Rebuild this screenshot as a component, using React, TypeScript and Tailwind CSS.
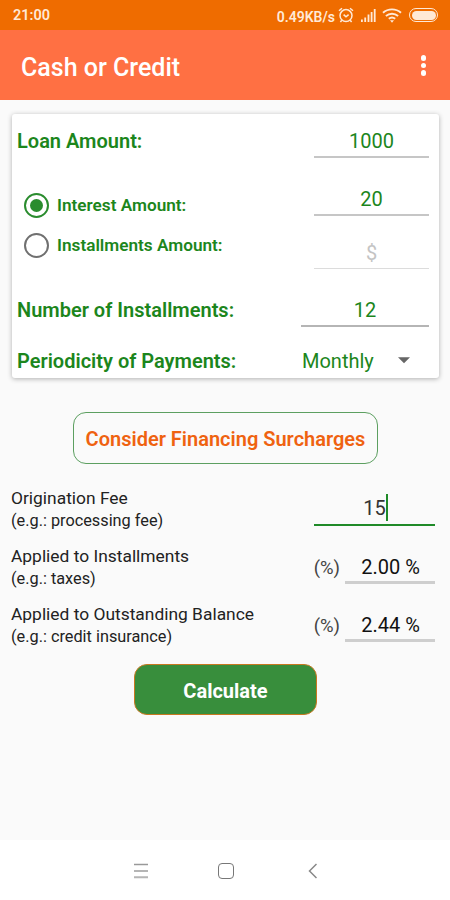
import { useState } from 'react';
import type { ReactNode } from 'react';

function StatusBar() {
  return (
    <div className="flex h-[30px] items-center justify-between bg-[#ef6c00] pl-[13px] pr-[12px] text-[#ffe9d6]">
      <span className="mt-[3px] text-[14.5px] font-semibold leading-none">21:00</span>
      <div className="flex items-center">
        <span className="mt-[3px] text-[14px] font-semibold leading-none">0.49KB/s</span>
        <svg className="ml-[3px]" width="16" height="16" viewBox="0 0 16 16" fill="none" stroke="currentColor" strokeWidth="1.5">
          <circle cx="8" cy="8.6" r="6" />
          <path d="M1 3.8 4 1.2M15 3.8 12 1.2M3.8 13.2 2.4 15M12.2 13.2l1.4 1.8M5.6 7.6 8 9.8l2.6-2.2" />
        </svg>
        <svg className="ml-[7px] mt-[1px]" width="15" height="13" viewBox="0 0 15 13" fill="currentColor">
          <path d="M0 10.5h1.8V13H0zM3.3 8.5h1.8V13H3.3zM6.6 5.5h1.8V13H6.6zM9.7 3h1.8v10H9.7zM12.8 0h1.8v13h-1.8z" />
        </svg>
        <svg className="ml-[6px] mt-[1px]" width="20" height="15" viewBox="0 0 20 15" fill="none" stroke="currentColor" strokeWidth="1.9">
          <path d="M1 4.8c5-4.6 13-4.6 18 0M3.9 8c3.5-3.1 8.7-3.1 12.2 0M6.8 10.8c1.9-1.6 4.5-1.6 6.4 0" />
          <path d="M8 12.3h4L10 14.8z" fill="currentColor" stroke="none" />
        </svg>
        <div className="ml-[7px] h-[14px] w-[29px] rounded-full border border-current p-[1.5px]">
          <div className="h-full rounded-full bg-current" />
        </div>
      </div>
    </div>
  );
}

function AppBar() {
  return (
    <header className="flex h-[70px] items-center justify-between bg-[#ff7043] pl-[21px] pr-[24px] text-white">
      <h1 className="mt-[4px] text-[25px] font-medium leading-none">Cash or Credit</h1>
      <button type="button" aria-label="More options" className="mt-px flex flex-col gap-[2px]">
        <span className="size-[5.5px] rounded-full bg-white" />
        <span className="size-[5.5px] rounded-full bg-white" />
        <span className="size-[5.5px] rounded-full bg-white" />
      </button>
    </header>
  );
}

function Radio({ checked, label, onSelect }: { checked: boolean; label: string; onSelect: () => void }) {
  return (
    <button type="button" role="radio" aria-checked={checked} onClick={onSelect} className="flex h-[40px] items-center gap-[8px]">
      <span
        className={[
          'flex size-[25px] items-center justify-center rounded-full border-2',
          checked ? 'border-[#2a8c2e]' : 'border-[#707070]',
        ].join(' ')}
      >
        {checked ? <span className="size-[13px] rounded-full bg-[#2a8c2e]" /> : null}
      </span>
      <span className="mt-[2px] whitespace-nowrap text-[17.2px] font-semibold leading-none text-[#1c861c]">{label}</span>
    </button>
  );
}

function Surcharge({ title, hint, children }: { title: string; hint: string; children: ReactNode }) {
  return (
    <div className="flex h-[58px] justify-between">
      <div className="whitespace-nowrap text-[#222]">
        <div className="text-[17.4px] leading-[24px]">{title}</div>
        <div className="text-[16.3px] leading-[22px]">{hint}</div>
      </div>
      {children}
    </div>
  );
}

function PercentField({ value }: { value: string }) {
  return (
    <div className="flex h-[40px] items-end">
      <span className="mr-[5px] pb-[4px] text-[18.5px] leading-[24px] text-[#444]">(%)</span>
      <div className="w-[90px] border-b-[3px] border-[#cecece] pb-[2px] pl-[1px] text-center text-[20px] leading-[24px] text-[#111]">
        {value}
      </div>
    </div>
  );
}

function NavBar() {
  return (
    <nav className="flex h-[60px] items-center bg-white pl-[133px] pt-px">
      <svg width="16" height="16" viewBox="0 0 16 16" strokeWidth="1.5">
        <path d="M1 1.5h14" stroke="#999" />
        <path d="M1 8h14M1 14.2h14" stroke="#b5b5b5" strokeWidth="2" />
      </svg>
      <div className="ml-[69px] size-[16px] rounded-[4px] border-[1.5px] border-[#777]" />
      <svg className="ml-[74px]" width="9" height="16" viewBox="0 0 9 16" fill="none" stroke="#888" strokeWidth="1.5">
        <path d="M8.5 1 1.500 8l7 7" />
      </svg>
    </nav>
  );
}

export default function App() {
  const [mode, setMode] = useState<'interest' | 'installments'>('interest');

  return (
    <div className="flex h-[900px] w-[450px] flex-col overflow-hidden bg-[#fafafa] font-[Roboto,sans-serif]">
      <StatusBar />
      <AppBar />

      <main className="flex-1 pt-[14px]">
        <section className="ml-[12px] h-[264px] w-[427px] rounded-[3px] bg-white pl-[5px] pr-[10px] text-[20px] leading-[24px] text-[#1c861c] shadow-[0_1px_5px_rgba(0,0,0,0.3)]">
          <div className="flex h-[44px] justify-between">
            <span className="pt-[15px] font-semibold">Loan Amount:</span>
            <div className="w-[115px] border-b-[2px] border-[#c6c6c6] pt-[15px] text-center">1000</div>
          </div>

          <div className="flex h-[111px] justify-between">
            <div className="pl-[7px] pt-[27px]" role="radiogroup">
              <Radio label="Interest Amount:" checked={mode === 'interest'} onSelect={() => setMode('interest')} />
              <Radio label="Installments Amount:" checked={mode === 'installments'} onSelect={() => setMode('installments')} />
            </div>
            <div className="w-[115px] text-center">
              <div className="h-[58px] border-b-[2px] border-[#c6c6c6] pt-[29px]">20</div>
              <div className="h-[53px] border-b border-[#dcdcdc] pt-[25px] text-[#c4c4c4]">$</div>
            </div>
          </div>

          <div className="flex h-[58px] justify-between">
            <span className="pt-[29px] font-semibold">Number of Installments:</span>
            <div className="w-[128px] border-b-[2px] border-[#b5b5b5] pt-[29px] text-center">12</div>
          </div>

          <div className="flex h-[51px] items-center justify-between pb-[3px] pt-[19px]">
            <span className="font-semibold">Periodicity of Payments:</span>
            <div className="flex w-[127px] items-center">
              <span>Monthly</span>
              <svg className="ml-auto mr-[19px]" width="12" height="7" viewBox="0 0 13 7" fill="#666">
                <path d="M0 0h13L6.5 6.5z" />
              </svg>
            </div>
          </div>
        </section>

        <button
          type="button"
          className="ml-[73px] mt-[34px] flex h-[52px] w-[305px] items-center justify-center whitespace-nowrap rounded-[13px] border border-[#5c9f60] pt-[2px] text-[20px] font-semibold text-[#ef6210]"
        >
          Consider Financing Surcharges
        </button>

        <section className="mt-[22px] pl-[11px] pr-[15px]">
          <Surcharge title="Origination Fee" hint="(e.g.: processing fee)">
            <div className="flex h-[40px] w-[121px] items-start justify-center border-b-[2px] border-[#1f8a28] pl-[2px] pt-[8px] text-[20px] leading-[29px] text-[#333]">
              15
              <span className="h-[27px] w-[2px] bg-[#1f8a28]" />
            </div>
          </Surcharge>
          <Surcharge title="Applied to Installments" hint="(e.g.: taxes)">
            <PercentField value="2.00 %" />
          </Surcharge>
          <Surcharge title="Applied to Outstanding Balance" hint="(e.g.: credit insurance)">
            <PercentField value="2.44 %" />
          </Surcharge>
        </section>

        <button
          type="button"
          className="ml-[134px] mt-[4px] flex h-[51px] w-[183px] items-center justify-center rounded-[13px] border border-[#c87820] bg-[#388e3c] pt-[2px] text-[20px] font-bold text-white"
        >
          Calculate
        </button>
      </main>

      <NavBar />
    </div>
  );
}
